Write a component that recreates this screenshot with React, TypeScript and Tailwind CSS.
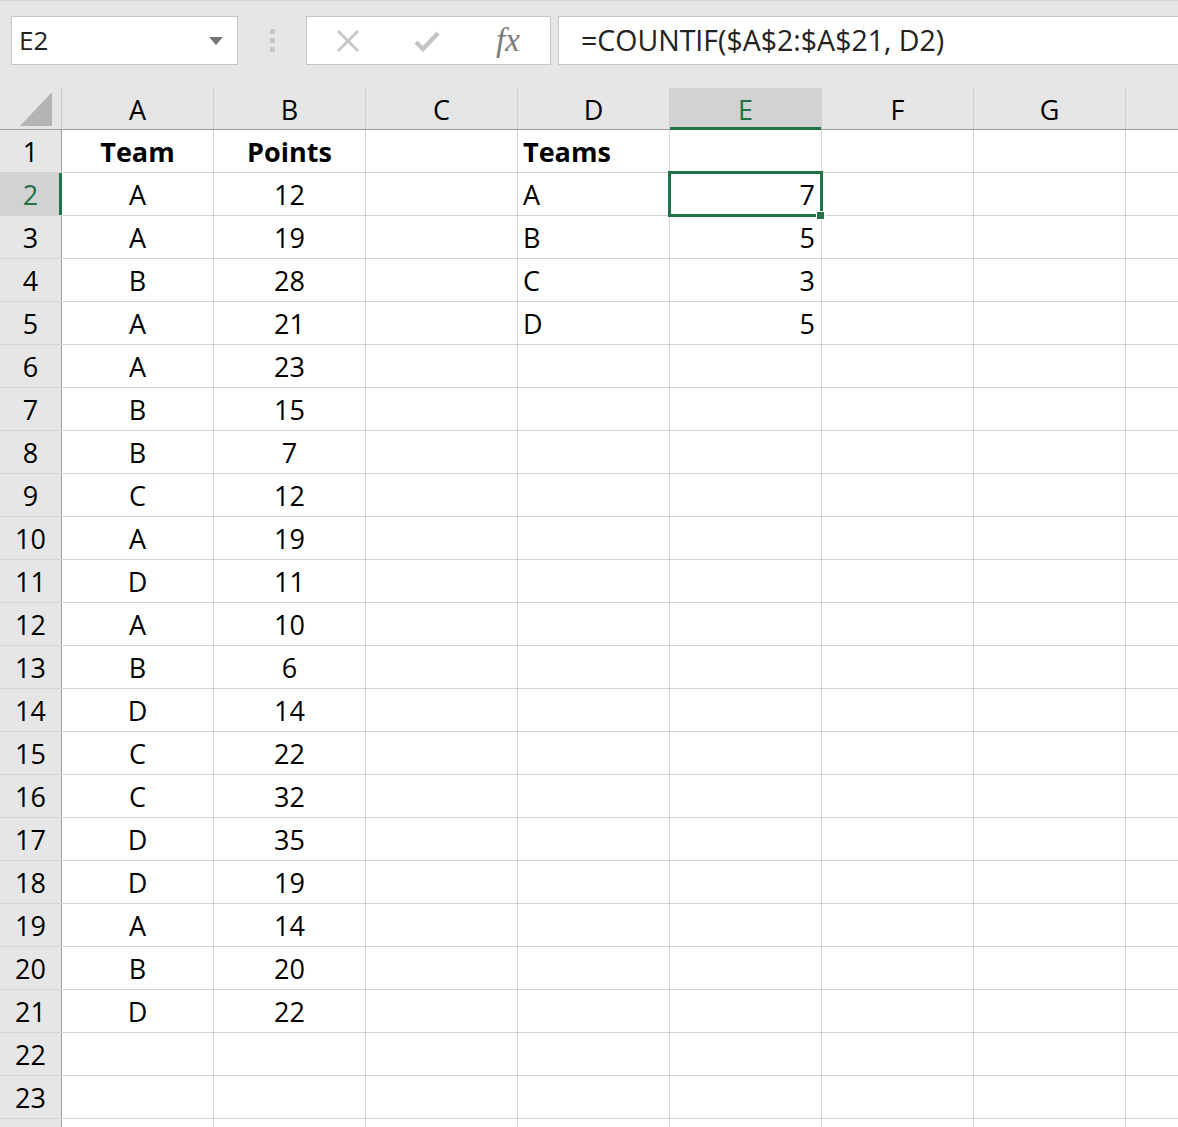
import React from "react";

const cols = ["A", "B", "C", "D", "E", "F", "G", ""];
const teams = ["A","A","B","A","A","B","B","C","A","D","A","B","D","C","C","D","D","A","B","D"];
const points = [12,19,28,21,23,15,7,12,19,11,10,6,14,22,32,35,19,14,20,22];
const summary: Record<number, [string, number]> = { 2: ["A", 7], 3: ["B", 5], 4: ["C", 3], 5: ["D", 5] };

function Cell({ children, align = "center", bold = false, last = false }: { children?: React.ReactNode; align?: "center" | "left" | "right"; bold?: boolean; last?: boolean }) {
  const a = align === "center" ? "justify-center" : align === "left" ? "justify-start pl-[5px]" : "justify-end pr-[6px]";
  return (
    <div className={`${last ? "flex-1" : "w-[152px] shrink-0 border-r border-[#d4d4d4]"} h-full flex items-center pt-[3px] ${a} ${bold ? "font-bold" : ""}`}>
      {children}
    </div>
  );
}

export default function App() {
  const rows = Array.from({ length: 24 }, (_, i) => i + 1);
  return (
    <div className="w-[1178px] h-[1127px] overflow-hidden bg-white text-black" style={{ fontFamily: "'Open Sans', 'Noto Sans', sans-serif" }}>
      {/* toolbar */}
      <div className="h-[88px] bg-[#e6e6e6] border-t border-[#d6d6d6] flex items-start pt-[15px]">
        <div className="ml-[11px] w-[227px] h-[49px] bg-white border border-[#c6c6c6] flex items-center justify-between pl-[7px] pr-[14px]">
          <span className="text-[26px] text-[#222]">E2</span>
          <svg width="14" height="8" viewBox="0 0 14 8"><path d="M0 0 L14 0 L7 8 Z" fill="#777" /></svg>
        </div>
        <div className="w-[68px] h-[49px] flex flex-col items-center justify-center gap-[4px]">
          <div className="w-[5px] h-[5px] bg-[#c6c6c6]" />
          <div className="w-[5px] h-[5px] bg-[#c6c6c6]" />
          <div className="w-[5px] h-[5px] bg-[#c6c6c6]" />
        </div>
        <div className="w-[245px] h-[49px] bg-white border border-[#c6c6c6] flex items-center">
          <svg className="ml-[29px]" width="24" height="22" viewBox="0 0 24 22"><path d="M2 1 L22 21 M22 1 L2 21" stroke="#c4c4c4" strokeWidth="2.5" /></svg>
          <svg className="ml-[54px]" width="26" height="22" viewBox="0 0 26 22"><path d="M2 12 L9 19 L24 3" stroke="#c4c4c4" strokeWidth="4.5" fill="none" /></svg>
          <span className="ml-[56px] text-[33px] italic text-[#7a7a7a] leading-none" style={{ fontFamily: "'Liberation Serif', serif" }}>fx</span>
        </div>
        <div className="ml-[7px] flex-1 h-[49px] bg-white border-y border-l border-[#c6c6c6] flex items-center pl-[22px]">
          <span className="text-[28.5px] text-[#222]">=COUNTIF($A$2:$A$21, D2)</span>
        </div>
      </div>
      {/* column headers */}
      <div className="h-[42px] bg-[#e6e6e6] flex border-b border-[#9e9e9e] text-[27px]">
        <div className="w-[62px] shrink-0 h-full relative border-r border-[#c8c8c8]">
          <svg className="absolute left-[20px] top-[4px]" width="32" height="34" viewBox="0 0 32 34"><path d="M32 0 L32 34 L0 34 Z" fill="#b4b4b4" /></svg>
        </div>
        {cols.map((c, i) => {
          const sel = c === "E";
          const last = i === cols.length - 1;
          return (
            <div key={i} className={`${last ? "flex-1" : "w-[152px] shrink-0 border-r border-[#d0d0d0]"} h-full flex items-center justify-center pt-[4px] relative ${sel ? "bg-[#d2d2d2] text-[#217346]" : ""}`}>
              {c}
              {sel && <div className="absolute left-0 right-0 bottom-[-1px] h-[3px] bg-[#217346]" />}
            </div>
          );
        })}
      </div>
      {/* rows */}
      <div className="relative text-[27px]">
        {rows.map((r) => {
          const sel = r === 2;
          let a: React.ReactNode = null, b: React.ReactNode = null, d: React.ReactNode = null, e: React.ReactNode = null;
          if (r === 1) { a = "Team"; b = "Points"; d = "Teams"; }
          else if (r <= 21) { a = teams[r - 2]; b = points[r - 2]; }
          if (summary[r]) { d = summary[r][0]; e = summary[r][1]; }
          return (
            <div key={r} className="h-[43px] flex border-b border-[#d4d4d4]">
              <div className={`w-[62px] shrink-0 h-full flex items-center justify-center pt-[3px] border-r ${sel ? "bg-[#d2d2d2] text-[#217346] border-r-[3px] border-[#217346] pl-[2px]" : "bg-[#e6e6e6] border-[#9e9e9e]"}`}>
                {r <= 23 ? r : null}
              </div>
              <Cell bold={r === 1}>{a}</Cell>
              <Cell bold={r === 1}>{b}</Cell>
              <Cell />
              <Cell align="left" bold={r === 1}>{d}</Cell>
              <Cell align="right">{e}</Cell>
              <Cell />
              <Cell />
              <Cell last />
            </div>
          );
        })}
        {/* selection box */}
        <div className="absolute left-[668px] top-[41px] w-[155px] h-[46px] border-[3px] border-[#217346]" />
        <div className="absolute left-[816px] top-[81px] w-[9px] h-[9px] bg-[#217346] border border-white" />
      </div>
    </div>
  );
}
